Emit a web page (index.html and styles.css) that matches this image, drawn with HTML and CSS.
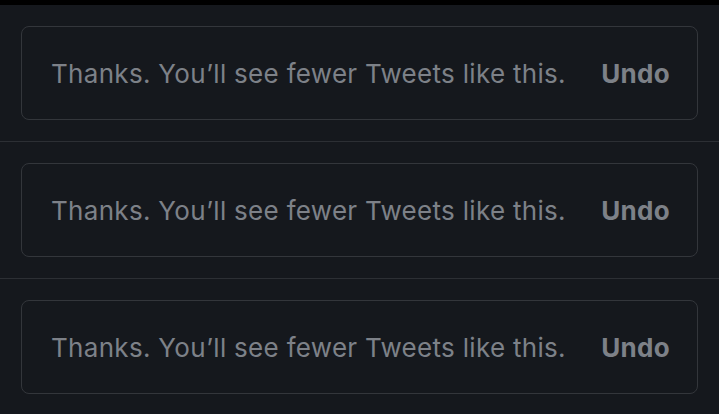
FILE: index.html
```html
<!DOCTYPE html>
<html lang="en">
<head>
<meta charset="utf-8">
<link rel="stylesheet" href="styles.css">
</head>
<body>
<div class="topbar"></div>
<div class="feed">
  <div class="row">
    <div class="notice">
      <span class="msg">Thanks. You’ll see fewer Tweets like this.</span>
      <span class="undo">Undo</span>
    </div>
  </div>
  <div class="row">
    <div class="notice">
      <span class="msg">Thanks. You’ll see fewer Tweets like this.</span>
      <span class="undo">Undo</span>
    </div>
  </div>
  <div class="row">
    <div class="notice">
      <span class="msg">Thanks. You’ll see fewer Tweets like this.</span>
      <span class="undo">Undo</span>
    </div>
  </div>
</div>
</body>
</html>
```
FILE: styles.css
```css
html, body {
  margin: 0;
  padding: 0;
  background: #15181d;
}
body {
  font-family: Inter, "Noto Sans", sans-serif;
  width: 719px;
  height: 414px;
  overflow: hidden;
}
.topbar {
  height: 5px;
  background: #000;
}
.row {
  padding: 21px;
  border-bottom: 1px solid #2c2f34;
}
.notice {
  box-sizing: border-box;
  height: 94px;
  border: 1.5px solid #33363b;
  border-radius: 8px;
  display: flex;
  align-items: center;
  justify-content: space-between;
  padding: 0 27px 0 29px;
}
.msg {
  font-size: 26px;
  letter-spacing: 0.3px;
  color: #7d8188;
}
.undo {
  font-size: 26px;
  font-weight: 700;
  letter-spacing: 0.3px;
  color: #7d8188;
}
```
